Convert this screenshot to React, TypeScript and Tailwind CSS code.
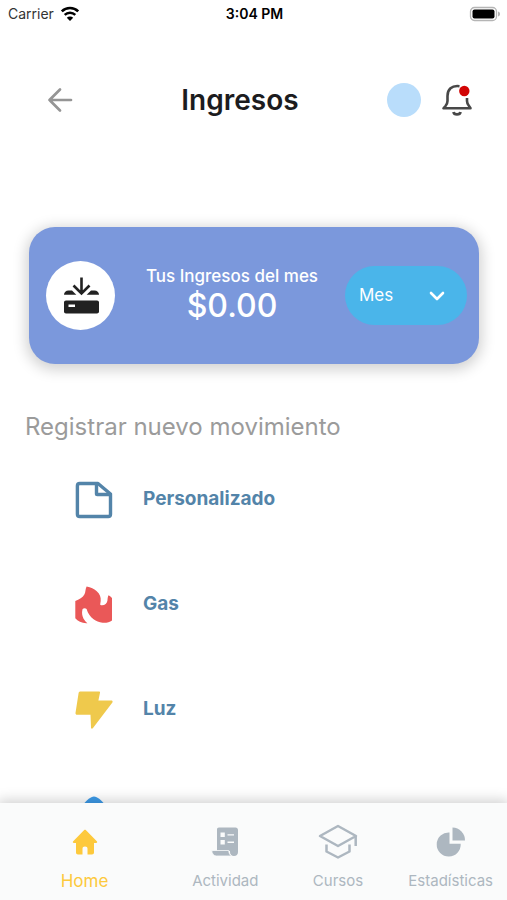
import React from "react";

type IconProps = { className?: string };

const WifiIcon = () => (
  <svg viewBox="0 0 20 16" className="h-4 w-5" fill="none" aria-hidden="true">
    <path d="M1.8 5.4a11.6 11.6 0 0 1 16.4 0" stroke="#000" strokeWidth="2.6" />
    <path d="M4.7 8.9a7.5 7.5 0 0 1 10.6 0" stroke="#000" strokeWidth="2.4" />
    <path d="M10 15 6.8 11.8a4.5 4.5 0 0 1 6.4 0Z" fill="#000" />
  </svg>
);

const BatteryIcon = () => (
  <svg viewBox="0 0 32 16" className="h-4 w-8" aria-hidden="true">
    <rect x="1.5" y="1.5" width="26" height="13" rx="4" fill="#fff" stroke="#b5b5b5" strokeWidth="1.3" />
    <rect x="3.5" y="3.5" width="22" height="9" rx="2" fill="#000" />
    <path d="M29 5.5c1.6.6 2 1.5 2 2.5s-.4 1.9-2 2.5Z" fill="#b5b5b5" />
  </svg>
);

const BackIcon = () => (
  <svg viewBox="0 0 26 26" className="size-[26px]" fill="none" stroke="#959595" strokeWidth="2.7" strokeLinecap="round" strokeLinejoin="round" aria-hidden="true">
    <path d="M24 13H2.5M13 2.5 2.500 13 13 23.5" />
  </svg>
);

const BellIcon = () => (
  <svg viewBox="0 0 32 34" className="h-[34px] w-8" fill="none" stroke="#484848" strokeWidth="2.6" strokeLinejoin="round" aria-hidden="true">
    <path d="M18.500 3.200C10.500 2.200 6.500 6.500 6.500 13v5c0 2-.8 3.500-2 5L2.500 25.300h27L28 23c-1.200-1.500-2-3-2-5v-3" />
    <path d="M12.500 29c.6 3.200 6.400 3.200 7 0" strokeWidth="2.800" />
    <circle cx="23.300" cy="8" r="5.200" fill="#d20505" stroke="none" />
  </svg>
);

const DepositIcon = () => (
  <svg viewBox="0 0 38 38" className="size-[38px]" fill="#222" aria-hidden="true">
    <path d="M2 17.800c0-2.500 2-4.300 4.500-4.300h3.500l4.300 4.300Z" />
    <path d="M37 17.800c0-2.500-2-4.300-4.500-4.300H29l-4.300 4.300Z" />
    <path d="M19.500.5V16.500M11.500 8.500l8 8 8-8" fill="none" stroke="#222" strokeWidth="2.600" />
    <path fillRule="evenodd" d="M4 23.500h31c1.200 0 2 .8 2 2v9c0 1.200-.8 2-2 2H4c-1.200 0-2-.8-2-2v-9c0-1.200.8-2 2-2Zm2.500 4v2.500h6.500v-2.500Z" />
  </svg>
);

const ChevronIcon = ({ className }: IconProps) => (
  <svg viewBox="0 0 16 10" className={className} fill="none" stroke="#fff" strokeWidth="2.600" strokeLinecap="round" strokeLinejoin="round" aria-hidden="true">
    <path d="m2 2 6 6 6-6" />
  </svg>
);

const FileIcon = () => (
  <svg viewBox="0 0 38 38" className="size-[38px]" fill="none" stroke="#5384a9" strokeWidth="3.400" strokeLinejoin="round" aria-hidden="true">
    <path d="M4.700 2.500H23L35.500 13v20.200c0 1.400-.9 2.300-2.300 2.300H4.700c-1.400 0-2.300-.9-2.300-2.300V4.800c0-1.400.9-2.300 2.300-2.300Z" />
    <path d="M21.500 3v9.700c0 .5.300.8.800.8H35" />
  </svg>
);

const FireIcon = () => (
  <svg viewBox="0 0 38 38" className="size-[38px]" fill="#ea5858" aria-hidden="true">
    <path d="M11.600.4c4.400.8 7.400 2.400 9.900 4.700 3.500 3 4.500 6.400 4.200 10-.1 1.500-.7 3-.3 4 3.600.8 6.600-1 7-4.300.3-2 .1-3.700 1.200-5.500 1.300.7 2.500 1.600 3.400 2.700V34.500c-2.300 1.700-5.600 2.600-9.400 2.300-3.600-.4-6.500-1.500-9-3.500-3.500-2.800-5.600-5.600-7-10.300-1-.9-3-.9-4 0-1.500 5 .2 10.500 4.800 14.200C7 37.500 3 35.500.3 32.300V15C4 13.500 8 11.500 9.500 8.300c1.200-2.600.7-5.300 2.100-7.900Z" />
  </svg>
);

const BoltIcon = () => (
  <svg viewBox="0 0 38 38" className="size-[38px]" fill="#efc94c" aria-hidden="true">
    <path d="M5.500.5h18.700c.8 0 1 .6.800 1.300l-1.600 7.700h12.800c1.400 0 1.800 1.200 1 2.200L18 37c-.9 1.200-2.300.6-2-.8l-.5-12.400H2c-1 0-1.600-.7-1.500-1.700L3.600 2C3.800 1 4.500.5 5.500.5Z" />
  </svg>
);

const DropIcon = () => (
  <svg viewBox="0 0 38 38" className="size-[38px]" fill="#3d9be9" aria-hidden="true">
    <path d="M19 .5c1.800 0 3.500 1 5.200 2.300C30.500 8 35 15 35 22.500 35 31.500 28 38 19 38S3 31.500 3 22.500C3 15 7.500 8 13.800 2.800 15.500 1.500 17.200.5 19 .5Z" />
  </svg>
);

const HomeIcon = () => (
  <svg viewBox="0 0 26 26" className="size-[26px]" fill="currentColor" aria-hidden="true">
    <path d="M12.200 1c.5-.5 1.100-.5 1.600 0l11 11.300c.7.800.4 1.700-.7 1.700H22v9.500c0 1.200-.8 2-2 2h-4.500v-5.800c0-1.300-.9-2.200-2.500-2.200s-2.500.9-2.500 2.200v5.800H6c-1.200 0-2-.8-2-2V14H1.900c-1.100 0-1.400-.9-.7-1.700Z" />
  </svg>
);

const ActivityIcon = () => (
  <svg viewBox="0 0 28 30" className="h-[30px] w-7" aria-hidden="true">
    <path fill="currentColor" d="M8 .5h16.500C26 .5 27 1.500 27 3v22c0 2.500-1.500 4-4 4-2.500 0-4-1.500-4-4v-1H6V2.500C6 1.200 6.700.5 8 .5Z" />
    <path fill="currentColor" stroke="#fafbfb" strokeWidth=".8" d="M.8 23.500h17c0 2.500.9 4.200 2.700 5.500H5.500c-2.700 0-4.700-2.500-4.700-5.500Z" />
    <path fill="#fafbfb" d="M9.500 5.500h4.300v4.600H9.500zM9.500 13h4.300v4.600H9.500zM16.500 7.200h6.500v1.400h-6.500zM16.500 14.600h6.500V16h-6.500z" />
  </svg>
);

const CapIcon = () => (
  <svg viewBox="0 0 40 36" className="h-9 w-10" fill="none" stroke="currentColor" strokeWidth="2.500" strokeLinejoin="round" aria-hidden="true">
    <path d="M20 2 38 12 20 22 2 12ZM37.700 12v10" />
    <path d="M8.500 20.500v7L20 33.500l11.500-6v-7" />
  </svg>
);

const PieIcon = () => (
  <svg viewBox="0 0 30 30" className="size-[30px]" fill="currentColor" aria-hidden="true">
    <path d="M13.500 5.500v11.300h11.200A12 12 0 1 1 13.500 5.500Z" />
    <path d="M16.500.5A12.700 12.700 0 0 1 29 13.500H16.500Z" />
  </svg>
);

const movements = [
  { label: "Personalizado", Icon: FileIcon },
  { label: "Gas", Icon: FireIcon },
  { label: "Luz", Icon: BoltIcon },
];

const tabs = [
  { label: "Actividad", Icon: ActivityIcon },
  { label: "Cursos", Icon: CapIcon },
  { label: "Estadísticas", Icon: PieIcon },
];

export default function App() {
  return (
    <div className="flex h-screen flex-col overflow-hidden bg-white font-['Inter',sans-serif] text-[#1c1c1e]">
      <div className="grid h-7 shrink-0 grid-cols-3 items-center pr-1.5 pl-2 text-sm text-black">
        <div className="flex items-center gap-1.5">
          <span className="text-[#333]">Carrier</span>
          <WifiIcon />
        </div>
        <span className="text-center font-semibold">3:04 PM</span>
        <div className="flex justify-end">
          <BatteryIcon />
        </div>
      </div>

      <header className="mt-12 flex h-12 shrink-0 items-center justify-between pr-[34px] pl-[47px]">
        <button type="button" aria-label="Volver">
          <BackIcon />
        </button>
        <h1 className="pl-5 text-[28px] leading-8 font-semibold">Ingresos</h1>
        <div className="flex items-center gap-5">
          <button type="button" aria-label="Perfil" className="size-[34px] rounded-full bg-[#b9ddfb]" />
          <button type="button" aria-label="Notificaciones">
            <BellIcon />
          </button>
        </div>
      </header>

      <main className="min-h-0 flex-1 overflow-hidden pt-[103px]">
        <section className="mr-7 ml-[29px] flex h-[137px] items-center rounded-[26px] bg-[#7b98dc] pr-3 pl-[17px] text-white shadow-[0_3px_14px_3px_rgba(0,0,0,0.18)]">
          <div className="flex size-[69px] shrink-0 items-center justify-center rounded-full bg-white">
            <DepositIcon />
          </div>
          <div className="flex flex-1 flex-col items-center pl-1">
            <p className="text-[17px] leading-5 font-medium whitespace-nowrap">Tus Ingresos del mes</p>
            <p className="text-[32px] leading-10 font-medium">$0.00</p>
          </div>
          <div className="relative shrink-0">
            <select
              aria-label="Periodo"
              defaultValue="Mes"
              className="h-[59px] w-[122px] appearance-none rounded-full bg-[#4ab5ea] pl-3.5 text-[17px] text-white"
            >
              <option>Mes</option>
              <option>Semana</option>
              <option>Año</option>
            </select>
            <ChevronIcon className="pointer-events-none absolute top-1/2 right-[22px] h-2.5 w-4 -translate-y-1/2" />
          </div>
        </section>

        <h2 className="mt-[47px] pl-[25px] text-2xl leading-8 text-[#9b9b9b]">Registrar nuevo movimiento</h2>
        <ul className="mt-1">
          {movements.map(({ label, Icon }) => (
            <li key={label}>
              <button type="button" className="flex h-[105px] w-full items-center gap-[30px] pl-[75px] text-left text-[19px] font-bold text-[#5384a9]">
                <Icon />
                {label}
              </button>
            </li>
          ))}
          <li>
            <button type="button" aria-label="Agua" className="flex h-[105px] w-full items-center pl-[75px]">
              <DropIcon />
            </button>
          </li>
        </ul>
      </main>

      <nav className="relative grid h-[97px] shrink-0 grid-cols-[3fr_2fr_2fr_2fr] bg-[#fafbfb] text-[#adb7c0] shadow-[0_-1px_12px_2px_rgba(0,0,0,0.18)]">
        <a href="#home" aria-current="page" className="flex flex-col items-center pt-5 text-[17px] leading-6 text-[#fdc93c]">
          <span className="flex h-[38px] items-center">
            <HomeIcon />
          </span>
          <span className="mt-2">Home</span>
        </a>
        {tabs.map(({ label, Icon }) => (
          <a key={label} href={`#${label.toLowerCase()}`} className="flex flex-col items-center pt-5 text-[15px] leading-6">
            <span className="flex h-[38px] items-center">
              <Icon />
            </span>
            <span className="mt-2">{label}</span>
          </a>
        ))}
      </nav>
    </div>
  );
}
